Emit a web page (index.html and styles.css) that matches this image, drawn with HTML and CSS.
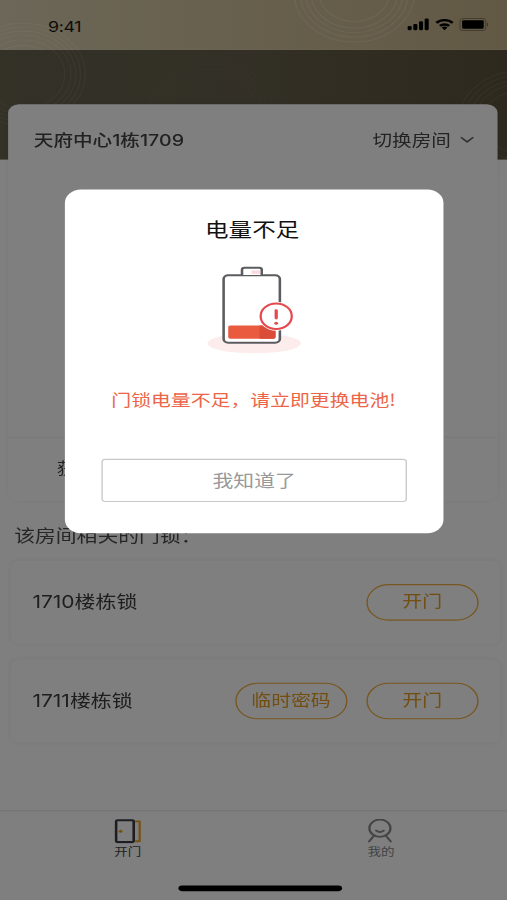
FILE: index.html
```html
<!DOCTYPE html>
<html lang="zh-CN">
<head>
<meta charset="utf-8">
<title>开门</title>
<link rel="stylesheet" href="styles.css">
</head>
<body>
<div class="screen">
  <header class="status">
    <svg class="rings" viewBox="0 0 375 144" fill="none" stroke="#fff6dc">
      <g stroke-opacity=".3" stroke-width=".8">
        <circle cx="262" cy="-6.5" r="44.5"/><circle cx="262" cy="-6.5" r="40"/><circle cx="262" cy="-6.5" r="36"/><circle cx="262" cy="-6.5" r="32"/><circle cx="262" cy="-6.5" r="26"/>
      </g>
      <g stroke-opacity=".3" stroke-width=".8" clip-path="url(#top)">
        <circle cx="17" cy="67" r="46"/><circle cx="17" cy="67" r="42.5"/><circle cx="17" cy="67" r="39"/><circle cx="17" cy="67" r="35.5"/><circle cx="17" cy="67" r="31"/><circle cx="17" cy="67" r="26"/>
      </g>
      <g stroke-opacity=".1" stroke-width=".8" clip-path="url(#low)">
        <circle cx="17" cy="67" r="46"/><circle cx="17" cy="67" r="42.5"/><circle cx="17" cy="67" r="39"/><circle cx="17" cy="67" r="35.5"/><circle cx="17" cy="67" r="31"/>
        <circle cx="385" cy="110" r="46"/><circle cx="385" cy="110" r="42"/><circle cx="385" cy="110" r="38"/><circle cx="385" cy="110" r="34"/><circle cx="385" cy="110" r="28"/>
      </g>
      <g stroke-opacity=".03" stroke-width=".8" clip-path="url(#low)">
        <circle cx="156" cy="99" r="45"/><circle cx="156" cy="99" r="41"/><circle cx="156" cy="99" r="37"/><circle cx="156" cy="99" r="33"/>
      </g>
      <clipPath id="top"><rect width="375" height="45"/></clipPath>
      <clipPath id="low"><rect y="45" width="375" height="99"/></clipPath>
    </svg>
    <span class="time">9:41</span>
    <svg class="signals" viewBox="0 0 60 14">
      <rect x="0.500" y="7.400" width="3" height="3.800" rx="1"/><rect x="4.700" y="5.600" width="3" height="5.600" rx="1"/><rect x="8.900" y="3.200" width="3" height="8" rx="1"/><rect x="13.100" y=".8" width="3" height="10.400" rx="1"/>
      <g fill="none" stroke="#000" stroke-width="2.200"><path d="M21.800 4.600a8.600 8.600 0 0 1 12 0"/><path d="M24.400 7.400a5 5 0 0 1 6.800 0"/></g><path d="M25.700 8.900a3.200 3.200 0 0 1 4.200 0L27.800 11.200z"/>
      <rect x="39.200" y=".7" width="19" height="10.800" rx="2.400" fill="none" stroke="#000" stroke-opacity=".3" stroke-width=".8"/><rect x="40.800" y="2.200" width="16" height="7.700" rx="1"/><path d="M59.200 4.400v3.400q1-.5 1-1.700t-1-1.700z" fill-opacity=".4"/>
    </svg>
  </header>
  <div class="band"></div>

  <main class="content">
    <section class="room">
      <div class="room-head">
        <h1>天府中心1栋1709</h1>
        <span class="switch">切换房间
          <svg viewBox="0 0 12 8"><path d="M1 1.600 6 6.200l5-4.600"/></svg>
        </span>
      </div>
      <div class="room-body"></div>
      <div class="room-foot">获取临时密码</div>
    </section>

    <h2>该房间相关的门锁：</h2>

    <section class="lock">
      <span class="lock-name">1710楼栋锁</span>
      <button class="pill">开门</button>
    </section>
    <section class="lock">
      <span class="lock-name">1711楼栋锁</span>
      <button class="pill">临时密码</button>
      <button class="pill">开门</button>
    </section>
  </main>

  <nav class="tabs">
    <div class="tab active">
      <svg viewBox="0 0 22 22" fill="none" stroke-linejoin="round"><path d="M16 2h3.300v18H16" stroke="#eaa41c" stroke-width="1.600"/><rect x="1.900" y="1" width="13" height="19.800" rx="1" stroke="#3c3c44" stroke-width="1.900"/><circle cx="5.200" cy="11" r="1.400" fill="#eaa41c"/></svg>
      <span>开门</span>
    </div>
    <div class="tab">
      <svg viewBox="0 0 22 22" fill="none" stroke="#8a8a8a" stroke-width="1.700" stroke-linecap="round"><ellipse cx="11" cy="8.200" rx="7.800" ry="7.800"/><path d="M8.200 10.400q2.800 2.600 5.600 0M6.400 15.200 3 20.200M15.800 15.400l3.200 4.800"/></svg>
      <span>我的</span>
    </div>
  </nav>
  <div class="home-bar"></div>

  <div class="mask">
    <div class="dialog">
      <h3>电量不足</h3>
      <svg class="battery" viewBox="0 0 70 80" fill="none">
        <ellipse cx="35" cy="69.800" rx="34.500" ry="9" fill="#fdecec"/>
        <rect x="12.400" y="8.400" width="41.600" height="60.800" rx="3.400" fill="#fff" stroke="#5c5c60" stroke-width="1.900"/>
        <path d="M26 8.200V3.400q0-1.800 1.800-1.800h11q1.800 0 1.800 1.800v4.800" fill="#fff" stroke="#5c5c60" stroke-width="1.900"/>
        <path d="M33 4h6.400v3H33z" fill="#fbd9dc"/>
        <rect x="15.800" y="53.600" width="35" height="12" rx="1.500" fill="#ea5a3f"/>
        <path d="M39 53.600h10.300q1.500 0 1.500 1.500v9q0 1.500-1.500 1.500H39z" fill="#da4c38"/>
        <circle cx="51.300" cy="45.300" r="13" fill="#fff"/>
        <circle cx="51.300" cy="45.300" r="11.500" fill="#fff" stroke="#e5494d" stroke-width="1.700"/>
        <path d="M51.300 40.300v6.700" stroke="#e5494d" stroke-width="2.400" stroke-linecap="round"/>
        <circle cx="51.300" cy="51.600" r="1.400" fill="#e5494d"/>
      </svg>
      <p>门锁电量不足，请立即更换电池!</p>
      <button class="ok">我知道了</button>
    </div>
  </div>
</div>
</body>
</html>
```

FILE: styles.css
```css
* { box-sizing: border-box; margin: 0; padding: 0; }

body {
  width: 507px;
  height: 900px;
  overflow: hidden;
  background: #808080;
  font-family: Inter, "Noto Sans CJK SC", sans-serif;
}

/* 375x812 artboard stretched to fill the window */
.screen {
  position: relative;
  display: flex;
  flex-direction: column;
  width: 375px;
  height: 812px;
  background: #fff;
  transform: scale(1.352, 1.10837);
  transform-origin: 0 0;
}

.status {
  position: relative;
  display: flex;
  justify-content: space-between;
  align-items: center;
  height: 45px;
  padding: 2px 14px 0 35.5px;
  background: linear-gradient(90deg, #d8ceb0, #cfc09a 50%, #c4b38a);
}
.rings { position: absolute; left: 0; top: 0; width: 375px; height: 144px; z-index: 1; }
.time { font-size: 13.2px; font-weight: 400; line-height: 20px; letter-spacing: -.3px; color: #1c1810; }
.signals { width: 60px; height: 14px; margin-top: -1px; }

.band {
  height: 98.5px;
  flex: none;
  background: linear-gradient(90deg, #68624f, #665f4c 50%, #5c533c);
}

.content { position: relative; z-index: 2; margin-top: -49.5px; }

.room {
  width: 361.5px;
  height: 358px;
  margin-left: 6px;
  display: flex;
  flex-direction: column;
  border-radius: 8px;
  background: #fff;
  box-shadow: 0 0 4px rgba(0, 0, 0, .06);
}
.room-head {
  display: flex;
  justify-content: space-between;
  align-items: center;
  height: 65px;
  padding: 0 17px 0 19px;
}
h1 { font-size: 14.5px; font-weight: 500; line-height: 20px; color: #444; }
.switch { display: flex; align-items: center; gap: 6px; font-size: 14.5px; line-height: 20px; color: #484848; }
.switch svg { width: 11px; height: 8px; margin-top: -2px; fill: none; stroke: #666; stroke-width: 1.5; }
.room-body {
  flex: 1;
  border-bottom: 1px solid #f0f0f0;
  background: radial-gradient(ellipse 70px 90px at 183px 100px, #fff0cc 0, #fff0cc 85%, #fff 100%);
}
.room-foot { height: 57px; padding-left: 36px; font-size: 14px; line-height: 55px; color: #444; }

h2 { margin: 20.5px 0 0 10.5px; font-size: 15.4px; font-weight: 400; line-height: 22px; color: #4c4c4c; }

.lock {
  display: flex;
  align-items: center;
  gap: 13.5px;
  width: 362px;
  height: 75px;
  margin: 11.5px 0 0 8px;
  padding: 0 16px;
  border-radius: 6px;
  background: #fff;
  box-shadow: 0 0 4px rgba(0, 0, 0, .06);
}
.lock + .lock { margin-top: 14px; }
.lock-name { flex: 1; padding-top: 1px; font-size: 15.5px; line-height: 22px; color: #3c3c3c; }
.pill {
  width: 83.5px;
  height: 33px;
  padding-bottom: 2.5px;
  border: 1.4px solid #f0ac3c;
  border-radius: 17px;
  background: none;
  font: 400 14.7px/20px "Noto Sans CJK SC", sans-serif;
  color: #e59c20;
}

.tabs {
  display: flex;
  height: 81px;
  margin-top: auto;
  border-top: 1px solid #e6e6e6;
}
.tab {
  flex: 1;
  display: flex;
  flex-direction: column;
  align-items: center;
  padding-top: 7px;
  font-size: 10px;
  line-height: 12px;
  color: #888;
}
.tab.active { color: #444; }
.tab svg { width: 22px; height: 22px; margin-bottom: .5px; }
.tab.active svg { margin-left: 3px; }
.tab.active span { margin-left: 1.5px; }
.tab:not(.active) span { margin-left: 1px; }

.home-bar {
  position: absolute;
  left: 132px;
  bottom: 8px;
  width: 121px;
  height: 5px;
  border-radius: 3px;
  background: #000;
}

.mask {
  position: absolute;
  inset: 0;
  z-index: 5;
  display: flex;
  align-items: flex-start;
  padding: 171px 0 0 48px;
  background: rgba(0, 0, 0, .5);
}
.dialog {
  display: flex;
  flex-direction: column;
  align-items: center;
  width: 280px;
  height: 310px;
  padding-top: 25px;
  border-radius: 12px;
  background: #fff;
}
h3 { margin-right: 3px; font-size: 17.4px; font-weight: 400; line-height: 24px; color: #111; }
.battery { width: 70px; height: 80px; margin: 20px 1px 0 0; }
p { margin: 28.5px 1px 0 0; font: 400 14.7px/22px "Noto Sans CJK SC", sans-serif; color: #ec6548; white-space: nowrap; }
.ok {
  width: 226px;
  height: 38.5px;
  margin-top: 43.5px;
  padding-bottom: 2px;
  border: 1px solid #c8c8c8;
  border-radius: 3px;
  background: #fff;
  font: 400 15.4px/22px "Noto Sans CJK SC", sans-serif;
  color: #999;
}
```
